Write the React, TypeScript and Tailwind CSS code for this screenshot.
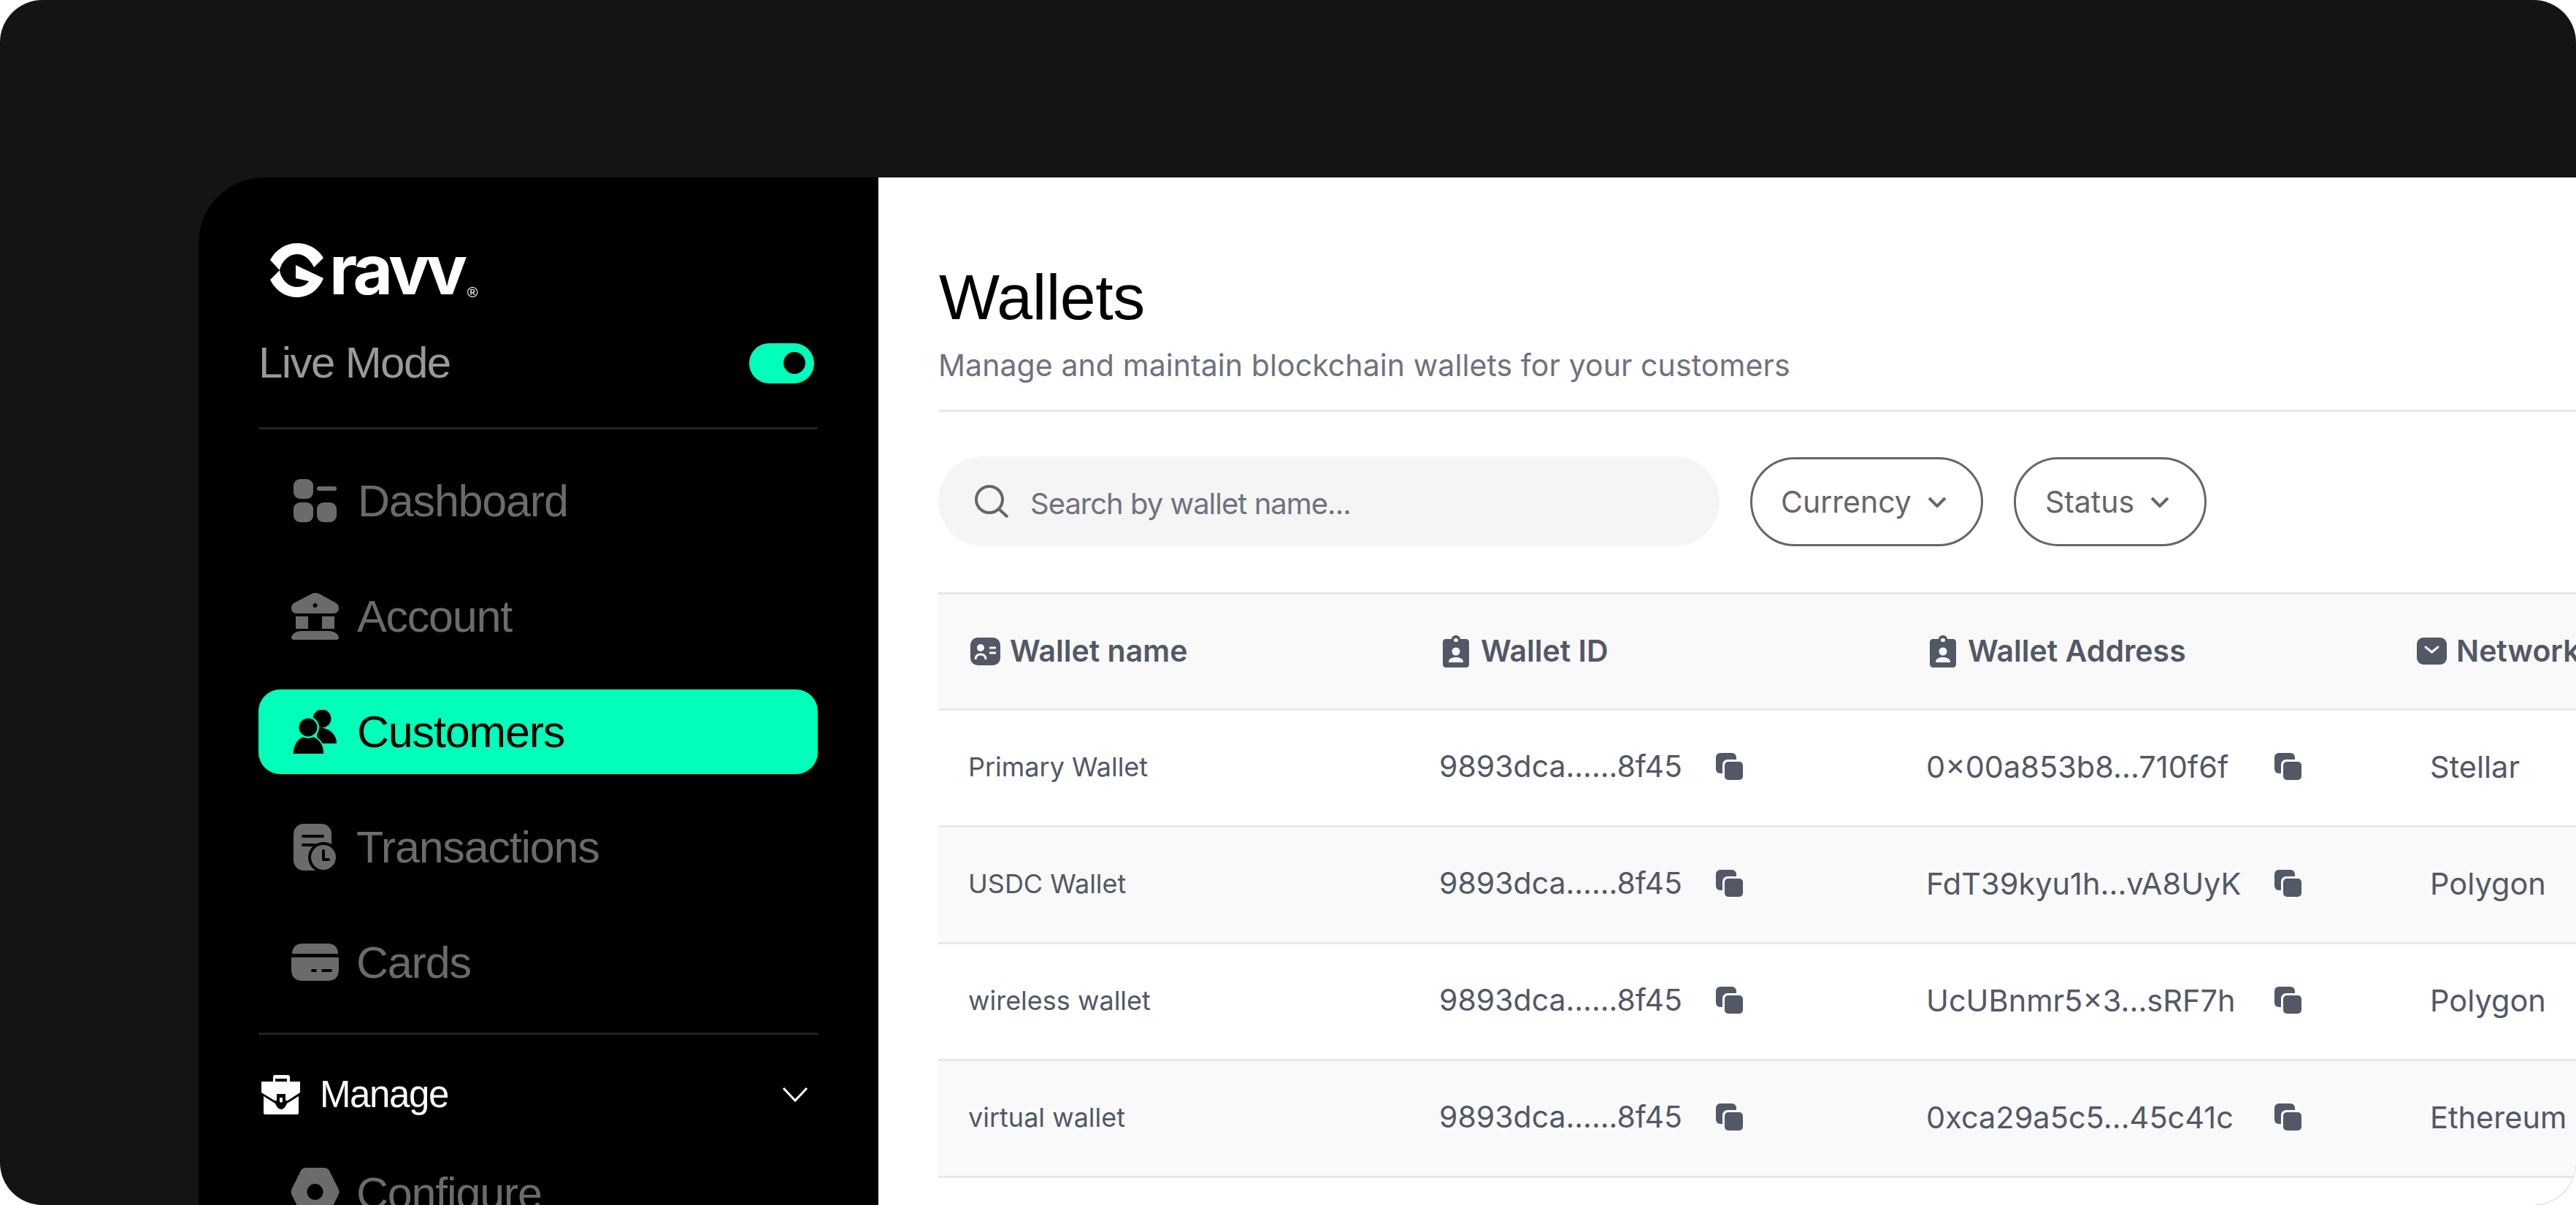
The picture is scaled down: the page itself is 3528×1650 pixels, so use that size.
const sans = "font-['Liberation_Sans',Arial,sans-serif]";
const inter = "font-['Inter',sans-serif]";

const GravvMark = () => (
  <svg width="73" height="74" viewBox="0 0 73 74" fill="#fff">
    <path d="M0 23C8 8 22 0 37 0C52 0 65 7 73 20L60 33C54 21 46 15 37 15C26 15 16 24 13 37Z" />
    <path d="M13 37C15 50 25 60 37 60C44 60 50 57 53 52L35 48V30L73 48C66 65 52 74 37 74C22 74 8 66 0 50Z" />
  </svg>
);

const DashboardIcon = () => (
  <svg width="66" height="60" viewBox="-3 0 66 60" fill="#6b6b6b">
    <rect x="0" y="0" width="27" height="27" rx="9" />
    <rect x="32" y="10" width="27" height="6" rx="3" />
    <rect x="0" y="32" width="27" height="27" rx="9" />
    <rect x="32" y="32" width="27" height="27" rx="9" />
  </svg>
);

const AccountIcon = () => (
  <svg width="66" height="64" viewBox="0 0 66 64" fill="#6b6b6b">
    <path fillRule="evenodd" d="M28 1C31 -0.5 35 -0.5 38 1L60 13C64 15 65 18 65 21C65 25 62 28 58 28H7C3 28 0 25 0 21C0 18 1 15 5 13ZM32.500 14A3 3 0 1 0 32.500 20A3 3 0 1 0 32.500 14Z" />
    <rect x="6" y="32" width="17" height="17" />
    <rect x="42" y="32" width="17" height="17" />
    <path d="M14 52H51C59 52 65 57 65 61C65 63 64 64 62 64H3C1 64 0 63 0 61C0 57 6 52 14 52Z" />
  </svg>
);

const CustomersIcon = () => (
  <svg width="66" height="60" viewBox="-3 0 66 60" fill="#000">
    <circle cx="39" cy="12" r="12.500" />
    <path d="M30 25C46 22 59 32 59 46H34Z" />
    <path d="M0 60C0 46 8 36 20 36C32 36 41 46 41 60Z" stroke="#00ffb8" strokeWidth="4" paintOrder="stroke" />
    <path d="M0 59C0 46 8 37 20 37C33 37 41 46 41 59Z" />
    <circle cx="20" cy="24" r="15" fill="#00ffb8" />
    <circle cx="20" cy="24" r="12.500" />
  </svg>
);

const TransactionsIcon = () => (
  <svg width="66" height="64" viewBox="-3 0 66 64" fill="#6b6b6b">
    <rect x="0" y="0" width="52" height="64" rx="14" />
    <path d="M13 17H40M13 29H29" stroke="#000" strokeWidth="4" strokeLinecap="round" />
    <circle cx="41" cy="46" r="21" fill="#000" />
    <circle cx="41" cy="46" r="17" />
    <path d="M41 37V49H48" fill="none" stroke="#000" strokeWidth="4" strokeLinecap="round" strokeLinejoin="round" />
  </svg>
);

const CardsIcon = () => (
  <svg width="66" height="52" viewBox="0 0 66 52" fill="#6b6b6b">
    <path d="M15 0H50C59 0 64 6 64 14H1C1 6 6 0 15 0Z" />
    <path d="M0 19H65V36C65 46 59 51 50 51H15C6 51 0 46 0 36Z" />
    <rect x="27" y="35" width="8" height="4" rx="2" fill="#000" />
    <rect x="41" y="35" width="15" height="4" rx="2" fill="#000" />
  </svg>
);

const BriefcaseIcon = () => (
  <svg width="54" height="54" viewBox="0 0 54 54" fill="#fff">
    <path fillRule="evenodd" d="M18 0H36C38 0 39 1 39 3V9H53V24L36 35H18L0 24V9H19V5H35V9H16V3C16 1 17 0 18 0Z" />
    <path d="M3 29L19 39C21 44 24 47 27 47C30 47 33 44 35 39L51 29V52C51 53 50 54 49 54H5C4 54 3 53 3 52Z" />
    <path d="M21 26H33V36C33 40 30 43 27 43C24 43 21 40 21 36Z" fill="#000" />
    <path d="M25 31H29V36C29 38 25 38 25 36Z" fill="#fff" />
  </svg>
);

const ConfigureIcon = () => (
  <svg width="66" height="70" viewBox="0 0 66 70" fill="#6b6b6b">
    <path fillRule="evenodd" d="M20 0H45C48 0 50 1 52 4L64 28C66 31 66 35 64 38L52 62C50 65 48 66 45 66H20C17 66 15 65 13 62L1 38C-1 35 -1 31 1 28L13 4C15 1 17 0 20 0ZM32.500 22A11 11 0 1 0 32.500 44A11 11 0 1 0 32.500 22Z" />
  </svg>
);

const NameIcon = () => (
  <svg width="42" height="40" viewBox="0 0 42 40" className="shrink-0">
    <rect x="0" y="1" width="41" height="38" rx="10" fill="#525866" />
    <circle cx="14" cy="15" r="5" fill="#f9f9f9" />
    <path d="M7 31C7 26 10 24 14 24C18 24 21 26 21 31" fill="none" stroke="#f9f9f9" strokeWidth="3" />
    <path d="M26 15H35M26 22H35" stroke="#f9f9f9" strokeWidth="3" />
  </svg>
);

const BadgeIcon = () => (
  <svg width="36" height="44" viewBox="0 0 36 44" className="shrink-0">
    <path d="M4 5H12C12 2 15 0 18 0C21 0 24 2 24 5H32C34 5 36 7 36 9V40C36 42 34 44 32 44H4C2 44 0 42 0 40V9C0 7 2 5 4 5Z" fill="#525866" />
    <rect x="15" y="4" width="6" height="5" rx="2.500" fill="#f9f9f9" />
    <circle cx="18" cy="22" r="5.500" fill="#f9f9f9" />
    <path d="M8 37C8 32 12 30 18 30C24 30 28 32 28 37Z" fill="#f9f9f9" />
  </svg>
);

const NetworkIcon = () => (
  <svg width="42" height="38" viewBox="0 0 42 38" className="shrink-0">
    <rect x="0" y="0" width="41" height="37" rx="9" fill="#525866" />
    <path d="M12 13L20.500 20L29 13" fill="none" stroke="#f9f9f9" strokeWidth="3" strokeLinecap="round" />
  </svg>
);

const CopyIcon = () => (
  <svg width="38" height="38" viewBox="0 0 38 38" className="shrink-0">
    <rect x="0" y="0" width="28" height="28" rx="6" fill="#525866" />
    <rect x="9" y="9" width="29" height="29" rx="7" fill="#fff" className="[fill:var(--row)]" />
    <rect x="12" y="12" width="25" height="25" rx="5" fill="#525866" />
  </svg>
);

const Chevron = () => (
  <svg width="26" height="18" viewBox="0 0 26 18" fill="none" stroke="#666" strokeWidth="4">
    <path d="M2 3L13 14L24 3" />
  </svg>
);

const navTop = [
  { label: "Dashboard", icon: <DashboardIcon />, gap: "ml-[25px]" },
  { label: "Account", icon: <AccountIcon />, gap: "ml-[24px]" },
  { label: "Customers", icon: <CustomersIcon />, active: true, gap: "ml-[24px]" },
  { label: "Transactions", icon: <TransactionsIcon />, gap: "ml-[23px]" },
  { label: "Cards", icon: <CardsIcon />, gap: "ml-[23px]" },
];

const wallets = [
  { name: "Primary Wallet", address: "0×00a853b8...710f6f", network: "Stellar" },
  { name: "USDC Wallet", address: "FdT39kyu1h...vA8UyK", network: "Polygon" },
  { name: "wireless wallet", address: "UcUBnmr5×3...sRF7h", network: "Polygon" },
  { name: "virtual wallet", address: "0xca29a5c5...45c41c", network: "Ethereum" },
];

const Sidebar = () => (
  <aside className={`${sans} w-[931px] h-[1500px] shrink-0 rounded-tl-[90px] bg-black pl-[82px] pr-[83px] pt-[90px]`}>
    <div className="flex items-end h-[74px] ml-[16px]">
      <GravvMark />
      <span className={`${inter} ml-[8px] text-[94px] leading-[74px] font-bold text-white h-[74px] tracking-[-4.5px] relative top-[-1px]`}>ravv</span>
      <span className={`${sans} text-[20px] leading-[20px] text-white mb-[-3px] ml-[4px]`}>®</span>
    </div>
    <div className="flex items-center justify-between mt-[57px] pb-[55px] border-b-[3px] border-[#222]">
      <span className="text-[60px] leading-[66px] text-[#999] tracking-[-1.6px]">Live Mode</span>
      <div className="flex items-center justify-end w-[89px] h-[55px] rounded-[28px] bg-[#00ffb8] pr-[12px] mr-[5px]">
        <span className="w-[30px] h-[30px] rounded-full bg-black" />
      </div>
    </div>
    <nav className="flex flex-col gap-[42px] mt-[40px]">
      {navTop.map((item) => (
        <div
          key={item.label}
          className={`flex items-center h-[116px] pl-[45px] rounded-[30px] ${item.active ? "bg-[#00ffb8] text-black" : "text-[#6b6b6b]"}`}
        >
          {item.icon}
          <span className={`${item.gap} text-[61px] leading-[66px] tracking-[-1.2px]`}>{item.label}</span>
        </div>
      ))}
    </nav>
    <div className="mt-[38px] border-t-[3px] border-[#222]" />
    <div className="flex items-center justify-between h-[164px] pl-[4px] pr-[13px] text-white">
      <div className="flex items-center">
        <BriefcaseIcon />
        <span className="ml-[26px] text-[51px] leading-[60px] tracking-[-1.4px]">Manage</span>
      </div>
      <svg width="36" height="22" viewBox="0 0 36 22" fill="none" stroke="#fff" strokeWidth="3">
        <path d="M2 2L18 19L34 2" />
      </svg>
    </div>
    <div className="flex items-center pl-[45px] text-[#6b6b6b] mt-[18px]">
      <ConfigureIcon />
      <span className="ml-[23px] text-[61px] leading-[66px] tracking-[-1.2px]">Configure</span>
    </div>
  </aside>
);

const Pill = ({ label, w }: { label: string; w: string }) => (
  <div className={`flex items-center justify-center gap-[22px] h-[122px] ${w} rounded-full border-[3px] border-[#666] text-[41px] text-[#666] pr-[8px] pt-[3px]`}>
    {label}
    <Chevron />
  </div>
);

const Wallets = () => (
  <main className={`${inter} flex-1 min-w-0 h-[1500px] overflow-hidden bg-white pl-[82px] pt-[114px]`}>
    <div className="border-b-[3px] border-[#e8e8e8] pb-[36px]">
      <h1 className={`${sans} text-[88px] leading-[100px] text-black tracking-[-0.5px] ml-[1px]`}>Wallets</h1>
      <p className="mt-[18px] text-[41px] leading-[50px] tracking-[0.08px] text-[#6f7280]">
        Manage and maintain blockchain wallets for your customers
      </p>
    </div>
    <div className="flex items-center mt-[61px]">
      <div className="flex items-center w-[1070px] h-[123px] rounded-full bg-[#f5f5f5] pl-[50px]">
        <svg width="48" height="46" viewBox="0 0 48 46" fill="none" stroke="#666" strokeWidth="4" className="shrink-0">
          <circle cx="20" cy="20" r="18" />
          <path d="M33 33L45 44" />
        </svg>
        <span className="ml-[28px] mt-[6px] text-[40px] tracking-[-1px] text-[#6f7280]">Search by wallet name...</span>
      </div>
      <div className="flex gap-[42px] ml-[42px]">
        <Pill label="Currency" w="w-[319px]" />
        <Pill label="Status" w="w-[264px]" />
      </div>
    </div>
    <div className="mt-[63px] border-t-[3px] border-[#e8e8e8] w-[2400px] text-[#525866]">
      <div className="grid grid-cols-[645px_668px_670px_417px] h-[159px] items-center bg-[#f9f9f9] border-b-[3px] border-[#e8e8e8] text-[41px] font-semibold">
        <div className="flex items-center gap-[12px] pl-[44px]"><NameIcon />Wallet name</div>
        <div className="flex items-center gap-[16px] pl-[46px]"><BadgeIcon />Wallet ID</div>
        <div className="flex items-center gap-[16px] pl-[45px]"><BadgeIcon />Wallet Address</div>
        <div className="flex items-center gap-[12px] pl-[42px] whitespace-nowrap"><NetworkIcon />Network</div>
      </div>
      {wallets.map((w, i) => (
        <div
          key={w.name}
          className={`grid grid-cols-[645px_668px_670px_417px] h-[160px] items-center pb-[3px] border-b-[3px] border-[#e8e8e8] ${i % 2 === 1 ? "bg-[#f9f9f9] [--row:#f9f9f9]" : "bg-white [--row:#fff]"}`}
        >
          <div className="pl-[41px] text-[36px]">{w.name}</div>
          <div className="flex items-center pl-[41px] text-[41px]">
            <span className="w-[379px]">9893dca......8f45</span>
            <CopyIcon />
          </div>
          <div className="flex items-center pl-[40px] text-[41.5px]">
            <span className="w-[477px] whitespace-nowrap">{w.address}</span>
            <CopyIcon />
          </div>
          <div className="pl-[60px] text-[41.5px]">{w.network}</div>
        </div>
      ))}
    </div>
  </main>
);

export default function App() {
  return (
    <div className="w-[3528px] h-[1650px] overflow-hidden rounded-[58px] bg-[#141414] pl-[272px] pt-[243px]">
      <div className="flex">
        <Sidebar />
        <Wallets />
      </div>
    </div>
  );
}
